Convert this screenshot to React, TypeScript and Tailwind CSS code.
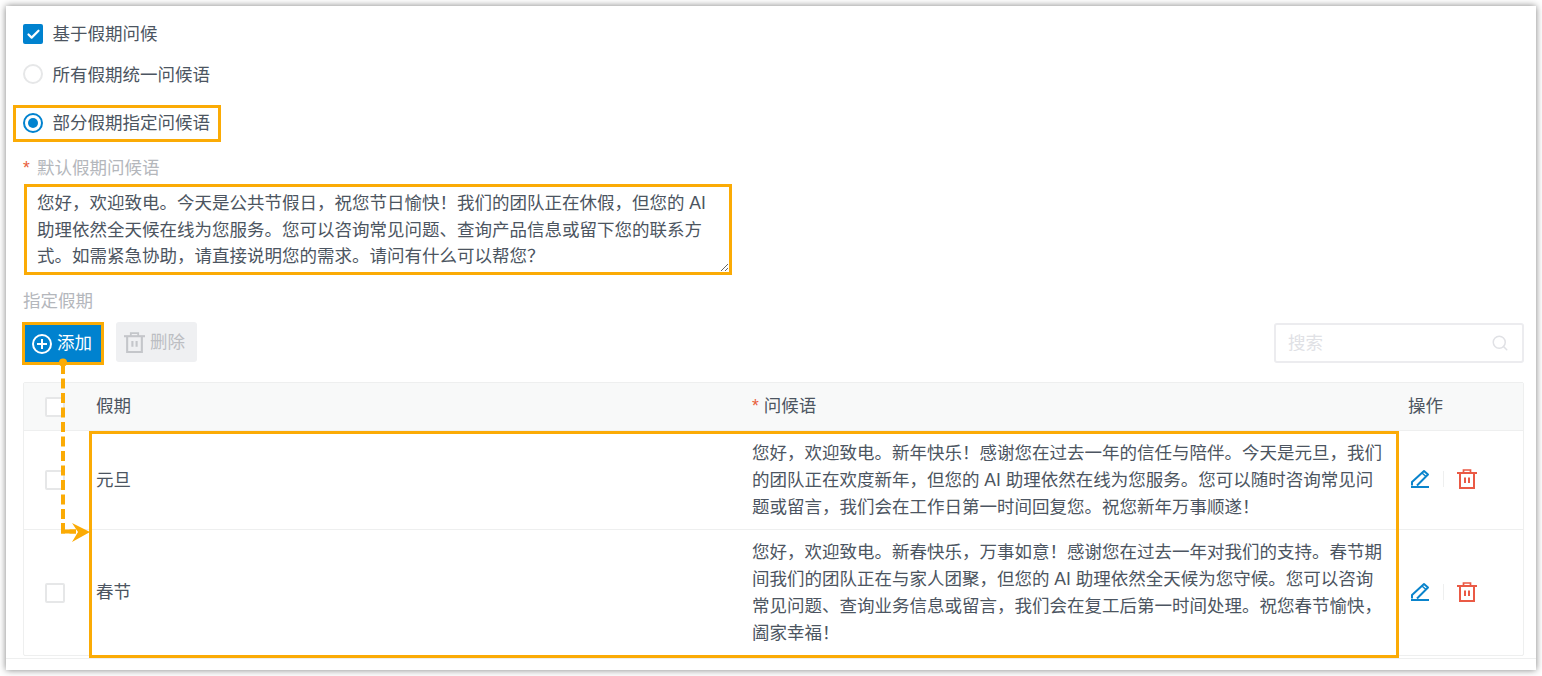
import { Check, Search } from "lucide-react";

const FONT = "font-['Liberation_Sans','Noto_Sans_CJK_SC',sans-serif]";

const rows = [
  {
    name: "元旦",
    height: "h-[99px]",
    text: "您好，欢迎致电。新年快乐！感谢您在过去一年的信任与陪伴。今天是元旦，我们的团队正在欢度新年，但您的 AI 助理依然在线为您服务。您可以随时咨询常见问题或留言，我们会在工作日第一时间回复您。祝您新年万事顺遂！",
  },
  {
    name: "春节",
    height: "h-[126px]",
    text: "您好，欢迎致电。新春快乐，万事如意！感谢您在过去一年对我们的支持。春节期间我们的团队正在与家人团聚，但您的 AI 助理依然全天候为您守候。您可以咨询常见问题、查询业务信息或留言，我们会在复工后第一时间处理。祝您春节愉快，阖家幸福！",
  },
];

const PencilIcon = () => (
  <svg width="20" height="20" viewBox="0 0 20 20" fill="none" stroke="#0a84cc" strokeWidth="2">
    <path d="M2 16.5 V13 L14 2 L18 5.5 L7 16.5" strokeLinejoin="round" />
    <path d="M12 4 L16 7.5" strokeWidth="1.5" />
    <path d="M1 18 H19" />
  </svg>
);

const TrashIcon = ({ color, size = 20 }: { color: string; size?: number }) => (
  <svg width={size} height={size} viewBox="0 0 20 20" fill="none" stroke={color} strokeWidth="2">
    <path d="M0 4 H20" />
    <path d="M6.5 4 V1 H13.5 V4" strokeWidth="1.7" />
    <path d="M3 4 V19 H17 V4" />
    <path d="M8 8.5 V14 M12 8.5 V14" />
  </svg>
);

const Box = () => (
  <span className="block w-5 h-5 rounded-[2px] border-2 border-[#e6e7e8] bg-white" />
);

export default function App() {
  return (
    <div className={`${FONT} w-[1542px] h-[676px] p-[6px] bg-white text-[17.5px] text-[#4c5561] overflow-hidden relative`}>
      <div className="h-[664px] bg-white shadow-[0_0_7px_rgba(0,0,0,0.5)] pl-[17px] pr-3 pt-[18px] relative">
        {/* Mode options */}
        <div className="flex items-center gap-[9.5px] h-5">
          <span className="w-5 h-5 rounded-[2px] bg-[#0082cf] flex items-center justify-center">
            <Check size={15} strokeWidth={3.5} className="text-white" />
          </span>
          <span>基于假期问候</span>
        </div>
        <div className="flex items-center gap-[9.5px] h-5 mt-5">
          <span className="w-5 h-5 rounded-full border-2 border-[#e6e7e8]" />
          <span className="mt-[2px]">所有假期统一问候语</span>
        </div>
        <div className="flex items-center gap-[9.5px] h-[37px] w-[208px] mt-[21px] -ml-[10px] pl-[7px] border-[3px] border-[#fbab05]">
          <span className="w-5 h-5 -mt-px rounded-full border-2 border-[#0082cf] flex items-center justify-center">
            <span className="w-[10px] h-[10px] rounded-full bg-[#0082cf]" />
          </span>
          <span>部分假期指定问候语</span>
        </div>

        {/* Default greeting */}
        <div className="flex items-center h-5 mt-4 text-[#b4b7bc]">
          <span className="text-[#e8603c] w-[14px]">*</span>
          <span>默认假期问候语</span>
        </div>
        <textarea
          className="block w-[708px] h-[91px] mt-[6px] ml-px pl-[10px] pr-2 pt-[3px] border-[3px] border-[#fbab05] bg-white text-[17.5px] leading-[26.6px] text-[#4c5561] outline-none"
          defaultValue="您好，欢迎致电。今天是公共节假日，祝您节日愉快！我们的团队正在休假，但您的 AI 助理依然全天候在线为您服务。您可以咨询常见问题、查询产品信息或留下您的联系方式。如需紧急协助，请直接说明您的需求。请问有什么可以帮您？"
        />

        <div className="h-5 mt-4 flex items-center text-[#b4b7bc]">指定假期</div>

        {/* Toolbar */}
        <div className="flex items-start h-[43px] mt-[11px]">
          <button className="w-[82px] h-[43px] -ml-px pl-[7px] border-[3px] border-[#fbab05] bg-[#0082cf] text-white flex items-center gap-[5px]">
            <svg width="20" height="20" viewBox="0 0 20 20" fill="none" stroke="white" strokeWidth="2">
              <circle cx="10" cy="10" r="9" />
              <path d="M10 5 V15 M5 10 H15" />
            </svg>
            添加
          </button>
          <button className="w-[81px] h-10 ml-3 pl-2 rounded-[3px] bg-[#eff0f2] text-[#bcbec2] flex items-center gap-[5px]">
            <TrashIcon color="#c4c6ca" size={21} />
            删除
          </button>
          <div className="ml-auto w-[250px] h-10 mt-px rounded-[3px] border-2 border-[#ececef] flex items-center justify-between pl-[12px] pr-[13px] text-[#e0e1e5]">
            <span>搜索</span>
            <Search size={18} strokeWidth={2} />
          </div>
        </div>

        {/* Holiday table */}
        <div className="relative mt-[17px] h-[274px] border border-[#eeefef] rounded-[2px]">
          <div className="flex items-center h-[48px] bg-[#f8f9f9] border-b border-[#eeefef]">
            <div className="w-[72px] pl-[21px]"><Box /></div>
            <div className="w-[656px]">假期</div>
            <div className="w-[656px]"><span className="text-[#e8603c] mr-[5px]">*</span>问候语</div>
            <div>操作</div>
          </div>
          {rows.map((row) => (
            <div key={row.name} className={`flex items-center ${row.height} border-b border-[#eeefef] last:border-b-0`}>
              <div className="w-[72px] pl-[21px]"><Box /></div>
              <div className="w-[656px]">{row.name}</div>
              <div className="w-[656px] pr-[18px] leading-[27px]">{row.text}</div>
              <div className="flex items-center pl-[2px] mb-[2px]">
                <PencilIcon />
                <span className="w-px h-4 bg-[#eeefef] mx-[13px]" />
                <TrashIcon color="#ea5a45" />
              </div>
            </div>
          ))}
          {/* Highlight over the table rows */}
          <div className="absolute left-[65px] top-[48px] w-[1310px] h-[227px] border-[3px] border-[#fbab05]" />
        </div>
        <div className="absolute left-0 right-0 top-[652px] h-px bg-[#eeefef]" />
      </div>

      {/* Callout arrow */}
      <svg className="absolute left-[50px] top-[355px]" width="45" height="195" viewBox="0 0 45 195" fill="none">
        <circle cx="13" cy="7.5" r="4" fill="#fbab05" />
        <path d="M13 9 V176.5 H26" stroke="#fbab05" strokeWidth="4" strokeDasharray="10 4.5" />
        <path d="M13 168 V176.5 H26" stroke="#fbab05" strokeWidth="4" />
        <path d="M22 168 L40 177 L22 187 L28 177 Z" fill="#fbab05" />
      </svg>
    </div>
  );
}
